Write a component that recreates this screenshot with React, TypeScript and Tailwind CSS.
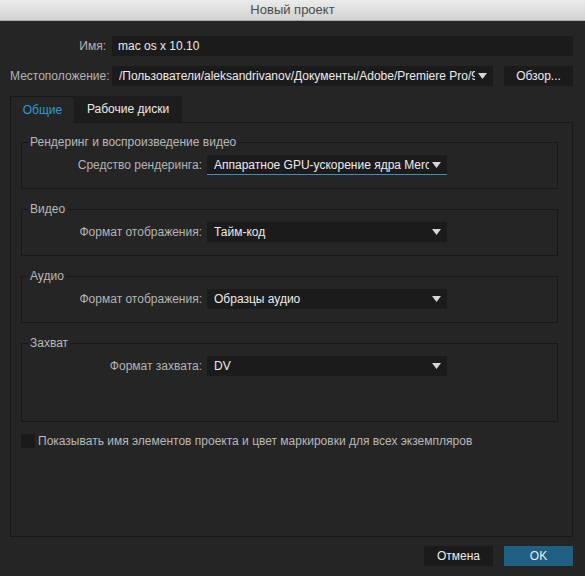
import React from 'react';

const Arrow: React.FC = () => (
  <svg width="9" height="6" viewBox="0 0 9 6" className="shrink-0">
    <path d="M0 0 L9 0 L4.5 6 Z" fill="#d6d6d6" />
  </svg>
);

const Select: React.FC<{ value: string; focused?: boolean }> = ({ value, focused }) => (
  <div className={`w-[240px] h-[20px] bg-[#1b1b1b] flex items-center gap-[3px] pl-[7px] pr-[6px] ${focused ? 'border-b border-[#3c8fc0]' : ''}`}>
    <span className="flex-1 overflow-hidden whitespace-nowrap text-[#ececec]">{value}</span>
    <Arrow />
  </div>
);

const Group: React.FC<{ title: string; label: string; value: string; focused?: boolean; tall?: boolean }> = ({ title, label, value, focused, tall }) => (
  <fieldset className={`border border-[#181818] mr-[14px] ml-[10px] px-0 pt-[6px] ${tall ? 'pb-[45px]' : 'pb-[13px]'}`}>
    <legend className="ml-[6px] px-[2px] text-[#b9b9b9] leading-[14px]">{title}</legend>
    <div className="flex items-center">
      <div className="w-[185px] text-right pr-[5px] text-[#b4b4b4]">{label}</div>
      <Select value={value} focused={focused} />
    </div>
  </fieldset>
);

export default function App() {
  return (
    <div className="w-[585px] h-[576px] bg-[#252525] flex flex-col text-[12px] select-none" style={{ fontFamily: '"Liberation Sans", Arial, sans-serif' }}>
      <div className="h-[21px] shrink-0 bg-gradient-to-b from-[#ebebeb] to-[#d2d2d2] border-b border-[#a9a9a9] flex items-center justify-center text-[13px] text-[#4a4a4a]">
        Новый проект
      </div>

      <div className="flex-1 flex flex-col pl-[10px] pr-[12px] pt-[15px] pb-[10px]">
        <div className="flex items-center h-[20px]">
          <div className="w-[102px] text-right pr-[6px] text-[#b4b4b4]">Имя:</div>
          <div className="flex-1 h-[20px] bg-[#1b1b1b] flex items-center pl-[6px] text-[#ececec]">mac os x 10.10</div>
        </div>

        <div className="flex items-center h-[20px] mt-[10px]">
          <div className="w-[102px] text-right pr-[6px] text-[#b4b4b4] whitespace-nowrap">Местоположение:</div>
          <div className="w-[381px] h-[20px] bg-[#1b1b1b] flex items-center gap-[3px] pl-[7px] pr-[6px]">
            <span className="flex-1 overflow-hidden whitespace-nowrap text-[#ececec]">/Пользователи/aleksandrivanov/Документы/Adobe/Premiere Pro/9.0</span>
            <Arrow />
          </div>
          <div className="ml-[11px] w-[69px] h-[20px] bg-[#1b1b1b] flex items-center justify-center text-[#ececec]">Обзор...</div>
        </div>

        <div className="flex mt-[10px] h-[27px]">
          <div className="w-[64px] bg-[#252525] border-l border-t border-[#181818] flex items-center justify-center text-[#2f9ad6]">Общие</div>
          <div className="w-[108px] bg-[#1d1d1d] border-b border-[#181818] flex items-center justify-center text-[#ececec]">Рабочие диски</div>
          <div className="flex-1 border-b border-[#181818]"></div>
        </div>

        <div className="flex-1 border-l border-r border-b border-[#181818] flex flex-col pt-[12px] gap-[13px]">
          <Group title="Рендеринг и воспроизведение видео" label="Средство рендеринга:" value="Аппаратное GPU-ускорение ядра Mercury Playback Engine (OpenCL)" focused />
          <Group title="Видео" label="Формат отображения:" value="Тайм-код" />
          <Group title="Аудио" label="Формат отображения:" value="Образцы аудио" />
          <Group title="Захват" label="Формат захвата:" value="DV" tall />
          <div className="flex items-center ml-[10px] -mt-[3px]">
            <div className="w-[14px] h-[14px] bg-[#1a1a1a]"></div>
            <span className="ml-[3px] text-[#b9b9b9]">Показывать имя элементов проекта и цвет маркировки для всех экземпляров</span>
          </div>
        </div>

        <div className="flex justify-end mt-[9px] gap-[11px]">
          <div className="w-[69px] h-[20px] bg-[#1b1b1b] flex items-center justify-center text-[#ececec]">Отмена</div>
          <div className="w-[69px] h-[20px] bg-[#1f5f82] flex items-center justify-center text-[#ececec]">OK</div>
        </div>
      </div>
    </div>
  );
}
